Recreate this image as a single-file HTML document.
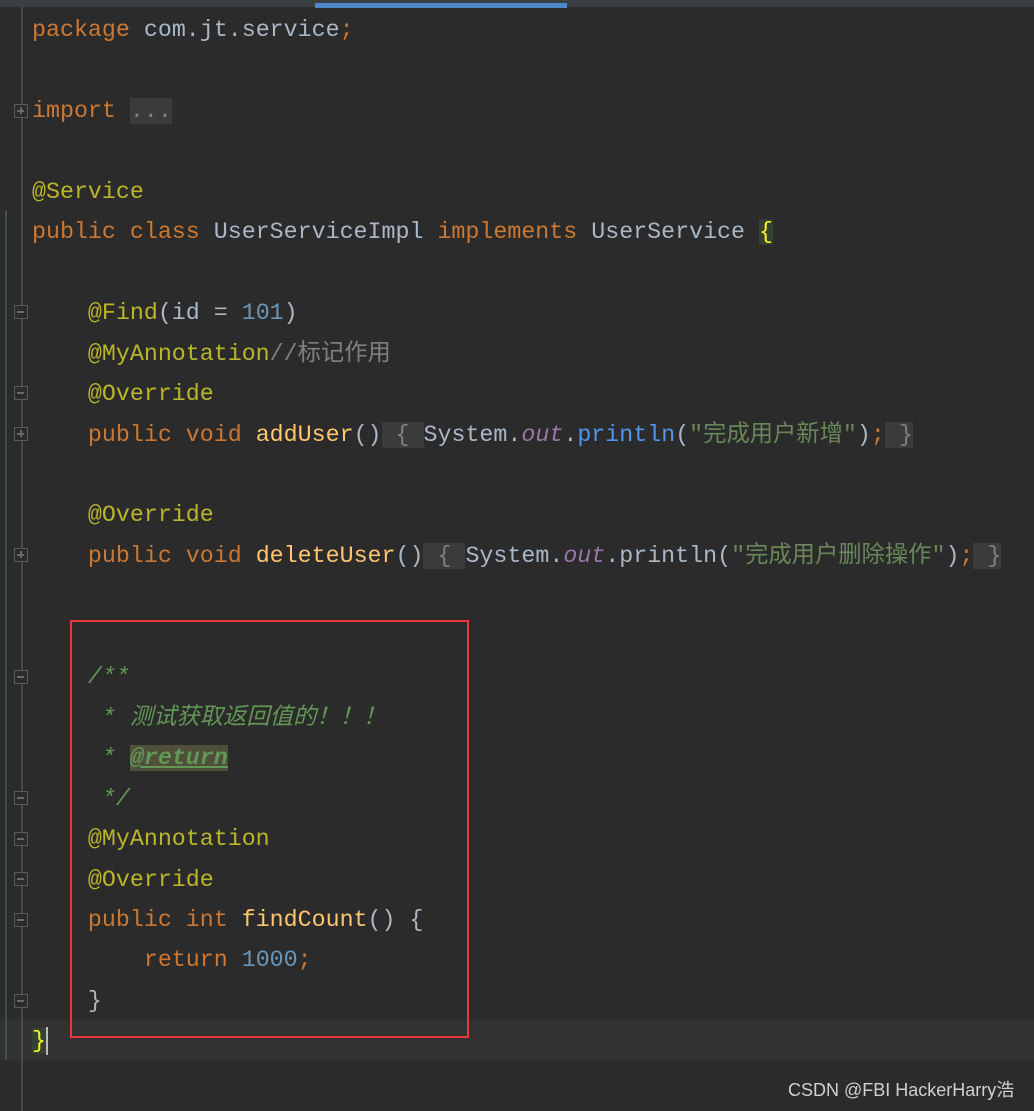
<!DOCTYPE html>
<html><head><meta charset="utf-8"><style>
body{margin:0;width:1034px;height:1111px;background:#2b2b2b;overflow:hidden;position:relative;font-family:"Liberation Mono","Noto Sans CJK SC",monospace;font-size:23.3px;color:#a9b7c6}
.top{position:absolute;left:0;top:0;width:1034px;height:7px;background:#3c3f41}
.blue{position:absolute;left:315px;top:3px;width:252px;height:5px;background:#4a88c7}
.gut{position:absolute;left:21px;top:7px;width:2px;height:1104px;background:#4a4a4a}
.gl{position:absolute;left:5px;top:210px;width:2px;height:850px;background:#3c5050}
.cur{position:absolute;left:0;top:1020px;width:1034px;height:40px;background:#323232}
.code{position:absolute;left:32px;top:10px;white-space:pre;line-height:40.45px}
.k{color:#cc7832}.a{color:#bbb529}.n{color:#6897bb}.s{color:#6a8759}.c{color:#808080}.d{color:#629755;font-style:italic}.m{color:#ffc66d}.o{color:#9876aa;font-style:italic}.p{color:#5394ec}
.f{background:#3b3b3b}
.tag{background:#4f4f3c;text-decoration:underline;font-weight:bold}
.box{position:absolute;left:70px;top:620px;width:395px;height:414px;border:2px solid #e83838}
.ic{position:absolute;left:14px;width:14px;height:14px;border:1.5px solid #5a5a5a;box-sizing:border-box;background:#2b2b2b}
.ic:after{content:"";position:absolute;left:2px;top:5px;width:7px;height:1.5px;background:#6a6a6a}
.pl:before{content:"";position:absolute;left:5px;top:2px;width:1.5px;height:7px;background:#6a6a6a}
.wm{position:absolute;left:788px;top:1076px;font-family:"Liberation Sans","Noto Sans CJK SC",sans-serif;font-size:18px;color:#d0d0d0}
.cb{background:#344134;color:#ffef28}
.caret{display:inline-block;width:2px;height:28px;background:#bbb;vertical-align:middle}
</style></head><body>
<div class="top"></div><div class="blue"></div>
<div class="cur"></div>
<div class="gl"></div>
<div class="gut"></div>
<div class="ic pl" style="top:104px"></div>
<div class="ic" style="top:305px"></div>
<div class="ic" style="top:386px"></div>
<div class="ic pl" style="top:427px"></div>
<div class="ic pl" style="top:548px"></div>
<div class="ic" style="top:670px"></div>
<div class="ic" style="top:791px"></div>
<div class="ic" style="top:832px"></div>
<div class="ic" style="top:872px"></div>
<div class="ic" style="top:913px"></div>
<div class="ic" style="top:994px"></div>
<div class="box"></div>
<div class="code"><span class="k">package</span> com.jt.service<span class="k">;</span>

<span class="k">import</span> <span class="f c">...</span>

<span class="a">@Service</span>
<span class="k">public class</span> UserServiceImpl <span class="k">implements</span> UserService <span class="cb">{</span>

    <span class="a">@Find</span>(id = <span class="n">101</span>)
    <span class="a">@MyAnnotation</span><span class="c">//标记作用</span>
    <span class="a">@Override</span>
    <span class="k">public void</span> <span class="m">addUser</span>()<span class="f c"> { </span>System.<span class="o">out</span>.<span class="p">println</span>(<span class="s">"完成用户新增"</span>)<span class="k">;</span><span class="f c"> }</span>

    <span class="a">@Override</span>
    <span class="k">public void</span> <span class="m">deleteUser</span>()<span class="f c"> { </span>System.<span class="o">out</span>.println(<span class="s">"完成用户删除操作"</span>)<span class="k">;</span><span class="f c"> }</span>


    <span class="d">/**</span>
<span class="d">     * 测试获取返回值的！！！</span>
<span class="d">     * <span class="tag">@return</span></span>
<span class="d">     */</span>
    <span class="a">@MyAnnotation</span>
    <span class="a">@Override</span>
    <span class="k">public int</span> <span class="m">findCount</span>() {
        <span class="k">return</span> <span class="n">1000</span><span class="k">;</span>
    }
<span class="cb">}</span><span class="caret"></span></div>
<div class="wm">CSDN @FBI HackerHarry浩</div>
</body></html>
